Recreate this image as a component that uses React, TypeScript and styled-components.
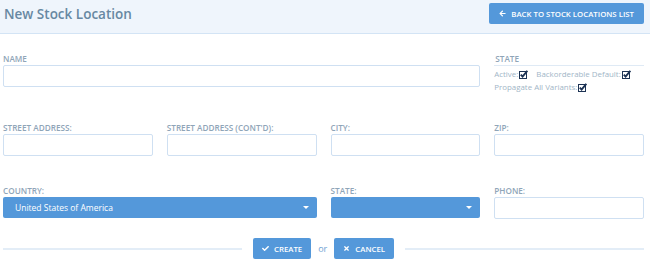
import React from "react";
import styled, { createGlobalStyle } from "styled-components";
import { FaArrowLeft, FaCheck, FaTimes } from "react-icons/fa";

const Global = createGlobalStyle`
  html, body { margin: 0; padding: 0; background: #fff; }
  body { font-family: "Open Sans", "Liberation Sans", sans-serif; }
  * { box-sizing: border-box; }
`;

const Header = styled.header`
  display: flex;
  align-items: center;
  justify-content: space-between;
  background: #eff5fc;
  border-bottom: 1px solid #d3e4f5;
  padding: 3px 6px 9px 4px;
  height: 34px;
`;

const Title = styled.h1`
  margin: 0;
  font-size: 13.5px;
  font-weight: 600;
  color: #6788a2;
  letter-spacing: 0;
`;

const Button = styled.button<{ $px?: number }>`
  display: inline-flex;
  align-items: center;
  gap: 5px;
  height: 21px;
  padding: 0 ${(p) => p.$px ?? 10}px;
  background: #5498da;
  color: #fff;
  border: none;
  border-radius: 2px;
  font-family: "Open Sans", "Liberation Sans", sans-serif;
  font-size: 7.8px;
  font-weight: 600;
  text-transform: uppercase;
  cursor: pointer;
  svg { width: 7px; height: 7px; }
`;

const Form = styled.form`
  padding: 19px 6px 0 3px;
  display: flex;
  flex-direction: column;
`;

const Row = styled.div<{ $mb: number }>`
  display: grid;
  grid-template-columns: repeat(4, 1fr);
  column-gap: 14px;
  margin-bottom: ${(p) => p.$mb}px;
`;

const Field = styled.div<{ $span?: number }>`
  grid-column: span ${(p) => p.$span ?? 1};
  display: flex;
  flex-direction: column;
`;

const Label = styled.label<{ $rule?: boolean }>`
  display: block;
  font-size: 8.2px;
  line-height: 12px;
  font-weight: 600;
  color: #8fa5b8;
  text-transform: uppercase;
  ${(p) => (p.$rule ? "border-bottom: 1px solid #dfeaf5; padding-left: 1px;" : "")}
`;

const Input = styled.input`
  height: 22px;
  width: 100%;
  border: 1px solid #cfe0f2;
  border-radius: 2px;
  background: #fff;
  font-family: inherit;
  font-size: 8.5px;
  outline: none;
`;

const Select = styled.div`
  position: relative;
  height: 21px;
  background: #5498da;
  border-radius: 2px;
  color: #fff;
  font-size: 8.5px;
  display: flex;
  align-items: center;
  padding-left: 12px;
  &::after {
    content: "";
    position: absolute;
    right: 8px;
    top: 9px;
    border-left: 3.5px solid transparent;
    border-right: 3.5px solid transparent;
    border-top: 3.5px solid #fff;
  }
`;

const Checks = styled.div`
  margin-top: 2px;
  display: flex;
  flex-wrap: wrap;
  column-gap: 8px;
`;

const Check = styled.span`
  display: inline-flex;
  align-items: center;
  gap: 1px;
  font-size: 7.9px;
  line-height: 13px;
  color: #a2b6c7;
`;

const Footer = styled.div`
  display: flex;
  align-items: center;
  gap: 11px;
  margin-top: 19px;
`;

const Rule = styled.div`
  flex: 1;
  height: 2px;
  background: #e3edf7;
`;

const Or = styled.span`
  font-size: 9px;
  color: #6fa2d3;
  margin: 0 -4px;
`;

const CheckIcon = () => (
  <svg width="9" height="9" viewBox="0 0 9 9">
    <rect x="0.5" y="1.5" width="7" height="7" fill="#fff" stroke="#1d3354" strokeWidth="1" />
    <path d="M1.8 4.6 L3.6 6.6 L8.3 0.8" fill="none" stroke="#1d3354" strokeWidth="1.9" />
  </svg>
);

export default function App() {
  return (
    <>
      <Global />
      <Header>
        <Title>New Stock Location</Title>
        <Button $px={10}>
          <FaArrowLeft />
          Back to Stock Locations List
        </Button>
      </Header>
      <Form onSubmit={(e) => e.preventDefault()}>
        <Row $mb={28}>
          <Field $span={3}>
            <Label>Name</Label>
            <Input />
          </Field>
          <Field>
            <Label $rule>State</Label>
            <Checks>
              <Check>
                Active:<CheckIcon />
              </Check>
              <Check>
                Backorderable Default:<CheckIcon />
              </Check>
              <Check>
                Propagate All Variants:<CheckIcon />
              </Check>
            </Checks>
          </Field>
        </Row>
        <Row $mb={29}>
          <Field>
            <Label>Street Address:</Label>
            <Input />
          </Field>
          <Field>
            <Label>Street Address (Cont'd):</Label>
            <Input />
          </Field>
          <Field>
            <Label>City:</Label>
            <Input />
          </Field>
          <Field>
            <Label>Zip:</Label>
            <Input />
          </Field>
        </Row>
        <Row $mb={0}>
          <Field $span={2}>
            <Label>Country:</Label>
            <Select>United States of America</Select>
          </Field>
          <Field>
            <Label>State:</Label>
            <Select />
          </Field>
          <Field>
            <Label>Phone:</Label>
            <Input />
          </Field>
        </Row>
        <Footer>
          <Rule />
          <Button $px={9}>
            <FaCheck />
            Create
          </Button>
          <Or>or</Or>
          <Button $px={9}>
            <FaTimes />
            Cancel
          </Button>
          <Rule />
        </Footer>
      </Form>
    </>
  );
}
